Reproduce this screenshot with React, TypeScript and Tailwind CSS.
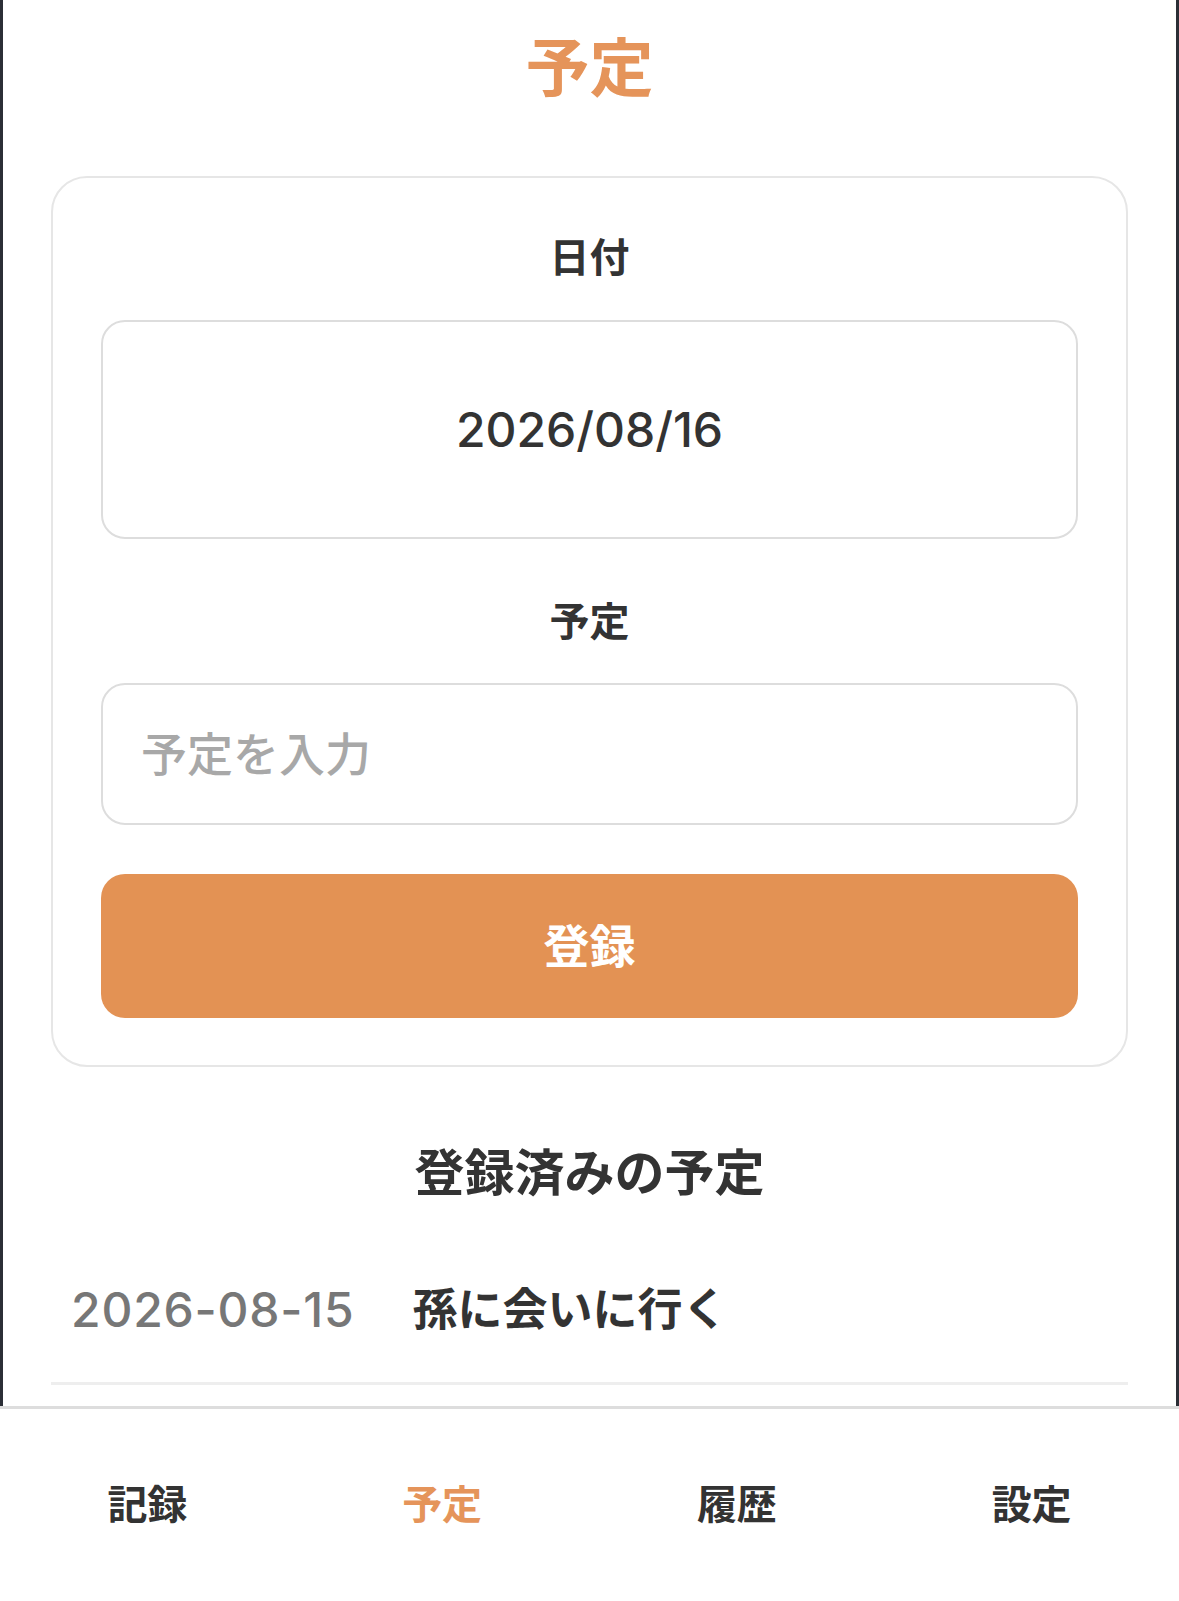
import React from 'react';

const FONT = '[font-family:Inter,"Noto_Sans_CJK_JP",sans-serif]';

const tabs = [
  { label: '記録', active: false },
  { label: '予定', active: true },
  { label: '履歴', active: false },
  { label: '設定', active: false },
];

const schedules = [{ date: '2026-08-15', title: '孫に会いに行く' }];

export default function App() {
  return (
    <div className={`flex h-[1601px] w-full flex-col overflow-hidden bg-white text-[#333333] ${FONT}`}>
      {/* --- main area with dark side frame --- */}
      <div className="flex min-h-0 flex-1 justify-center bg-[#2b2e36] px-[3px]">
        <main className="flex w-full flex-col bg-white px-[48px] pt-[20px]">
          <h1 className="text-center text-[64px] font-semibold leading-[96px] text-[#e5945a]">予定</h1>

          {/* Form card */}
          <section className="mt-[60px] rounded-[36px] border-2 border-[#e6e6e6] px-[48px] pb-[47px] pt-[50px]">
            <p className="text-center text-[40px] font-bold leading-[60px]">日付</p>
            <div className="mt-[32px] flex h-[219px] items-center justify-center rounded-[24px] border-2 border-[#dddddd]">
              <span className="text-[48px] font-medium">2026/08/16</span>
            </div>

            <p className="mt-[53px] text-center text-[40px] font-bold leading-[60px]">予定</p>
            <input
              type="text"
              placeholder="予定を入力"
              className="mt-[31px] block h-[142px] w-full rounded-[24px] border-2 border-[#dddddd] bg-white pl-[38px] text-[46px] font-medium text-[#333333] outline-none placeholder:text-[#a8a8a8]"
            />

            <button className="mt-[49px] flex h-[144px] w-full items-center justify-center rounded-[24px] bg-[#e39254] text-[46px] font-bold text-white">
              登録
            </button>
          </section>

          <h2 className="mt-[69px] text-center text-[50px] font-semibold leading-[75px]">登録済みの予定</h2>

          <ul className="mt-[27px]">
            {schedules.map((s) => (
              <li
                key={s.date}
                className="flex items-center gap-[58px] border-b-[3px] border-[#eeeeee] px-[20px] py-[36px] text-[48px] leading-[72px]"
              >
                <span className="font-medium tracking-[0.8px] text-[#777777]">{s.date}</span>
                <span className="text-[45px] font-semibold">{s.title}</span>
              </li>
            ))}
          </ul>
        </main>
      </div>

      {/* --- bottom tab bar --- */}
      <nav className="grid h-[195px] shrink-0 grid-cols-4 border-t-[3px] border-[#dddddd] bg-white">
        {tabs.map((t) => (
          <div
            key={t.label}
            className={`flex items-center justify-center text-[40px] font-bold ${t.active ? 'text-[#e5945a]' : 'text-[#333333]'}`}
          >
            {t.label}
          </div>
        ))}
      </nav>
    </div>
  );
}
